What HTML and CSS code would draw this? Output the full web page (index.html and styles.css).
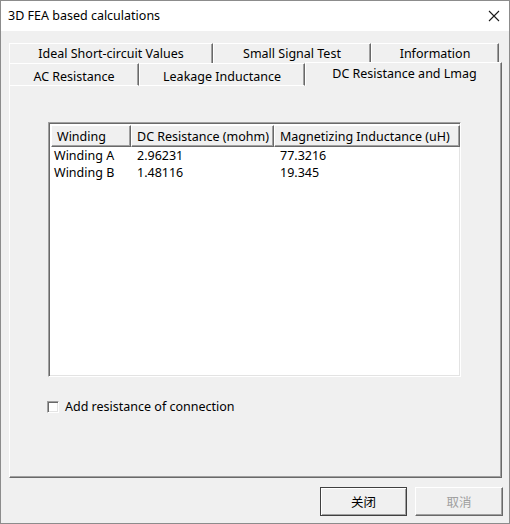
FILE: index.html
```html
<!DOCTYPE html>
<html lang="en">
<head>
    <meta charset="utf-8" />
    <title>3D FEA based calculations</title>
    <link rel="stylesheet" href="styles.css">
</head>
<body>
<div class="window">
    <div class="titlebar">
        <span class="title">3D FEA based calculations</span>
        <svg class="close" width="12" height="12" viewBox="0 0 12 12">
            <path d="M1 1 L11 11 M11 1 L1 11" stroke="#1a1a1a" stroke-width="1.1" fill="none"/>
        </svg>
    </div>

    <div class="client">
        <div class="tabs">
            <div class="tab-row back">
                <div class="tab w204">Ideal Short-circuit Values</div>
                <div class="tab w158">Small Signal Test</div>
                <div class="tab w128">Information</div>
            </div>
            <div class="tab-row front">
                <div class="tab w130">AC Resistance</div>
                <div class="tab w166">Leakage Inductance</div>
                <div class="tab w197 active">DC Resistance and Lmag</div>
            </div>
        </div>

        <div class="panel">
            <div class="listview">
                <div class="lv-head">
                    <div class="col c1">Winding</div>
                    <div class="col c2">DC Resistance (mohm)</div>
                    <div class="col c3">Magnetizing Inductance (uH)</div>
                </div>
                <div class="lv-row">
                    <div class="cell c1">Winding A</div>
                    <div class="cell c2">2.96231</div>
                    <div class="cell c3">77.3216</div>
                </div>
                <div class="lv-row">
                    <div class="cell c1">Winding B</div>
                    <div class="cell c2">1.48116</div>
                    <div class="cell c3">19.345</div>
                </div>
            </div>

            <label class="check">
                <span class="box"></span>
                <span>Add resistance of connection</span>
            </label>
        </div>

        <div class="buttons">
            <button type="button" class="btn default">关闭</button>
            <button type="button" class="btn" disabled>取消</button>
        </div>
    </div>
</div>
</body>
</html>
```

FILE: styles.css
```css
html,body{margin:0;padding:0;background:#f0f0f0}
body{font-family:"Noto Sans","Noto Sans CJK SC",sans-serif;font-size:12.5px;color:#000}

.window{width:510px;height:524px;box-sizing:border-box;border:1px solid #8c8c8c;display:flex;flex-direction:column;background:#f0f0f0}

.titlebar{height:30px;background:#fff;display:flex;align-items:center;justify-content:space-between;padding:0 9px 0 7px;flex:none}
.title{font-size:12.5px;line-height:16px}

.client{flex:1;display:flex;flex-direction:column;padding:12px 6px 0 8px}

.tabs{display:flex;flex-direction:column}
.tab-row{display:flex}
.tab{box-sizing:border-box;text-align:center;background:#f0f0f0;border-top:1px solid #fff;border-left:1px solid #fff;border-right:1px solid #696969;box-shadow:inset -1px 0 #a0a0a0;white-space:nowrap}
.back .tab{height:20px;line-height:19px}
.front .tab{height:23px;line-height:25px;border-bottom:1px solid #fff}
.front .tab.active{height:24px;margin-top:-1px;line-height:21px;border-bottom:none;padding-left:2px}
.w204{width:204px}
.w158{width:158px}
.w128{width:128px}
.w130{width:130px}
.w166{width:166px}
.w197{width:197px}

.panel{width:493px;height:392px;box-sizing:border-box;border-left:1px solid #fff;border-right:1px solid #696969;border-bottom:1px solid #696969;box-shadow:inset -1px -1px #a0a0a0;padding:36px 0 0 38px;display:flex;flex-direction:column}

.listview{width:413px;height:255px;box-sizing:border-box;background:#fff;border:1px solid;border-color:#a0a0a0 #fff #fff #a0a0a0;box-shadow:inset 1px 1px #696969,inset -1px -1px #e3e3e3;padding:2px 0 0 2px}
.lv-head{display:flex;height:22px}
.col{box-sizing:border-box;height:22px;line-height:22px;padding-left:5px;background:#f0f0f0;border-left:1px solid #fff;border-top:1px solid #fff;border-right:1px solid #696969;border-bottom:1px solid #696969;box-shadow:inset -1px -1px #a0a0a0;white-space:nowrap;overflow:hidden}
.lv-row{display:flex;height:17px;line-height:17px}
.cell{box-sizing:border-box;padding-left:6px;white-space:nowrap}
.lv-row .c1{padding-left:3px}
.c1{width:80px}
.c2{width:143px}
.c3{width:186px}

.check{display:flex;align-items:center;gap:6px;margin-top:23px;margin-left:-1px;height:13px}
.box{width:12px;height:12px;box-sizing:border-box;background:#fff;border:1px solid;border-color:#a0a0a0 #fff #fff #a0a0a0;box-shadow:inset 1px 1px #696969,inset -1px -1px #e3e3e3}

.buttons{display:flex;justify-content:flex-end;gap:8px;margin-top:9px}
.btn{width:88px;height:29px;box-sizing:border-box;background:#f0f0f0;font-family:"Noto Sans CJK SC",sans-serif;font-size:12.5px;color:#000;border:1px solid;border-color:#fff #696969 #696969 #fff;box-shadow:inset -1px -1px #a0a0a0;padding:0}
.btn.default{width:87px;border:1px solid #404040;box-shadow:inset 1px 1px #fff,inset -1px -1px #a0a0a0}
.btn[disabled]{color:#a0a0a0}
```
